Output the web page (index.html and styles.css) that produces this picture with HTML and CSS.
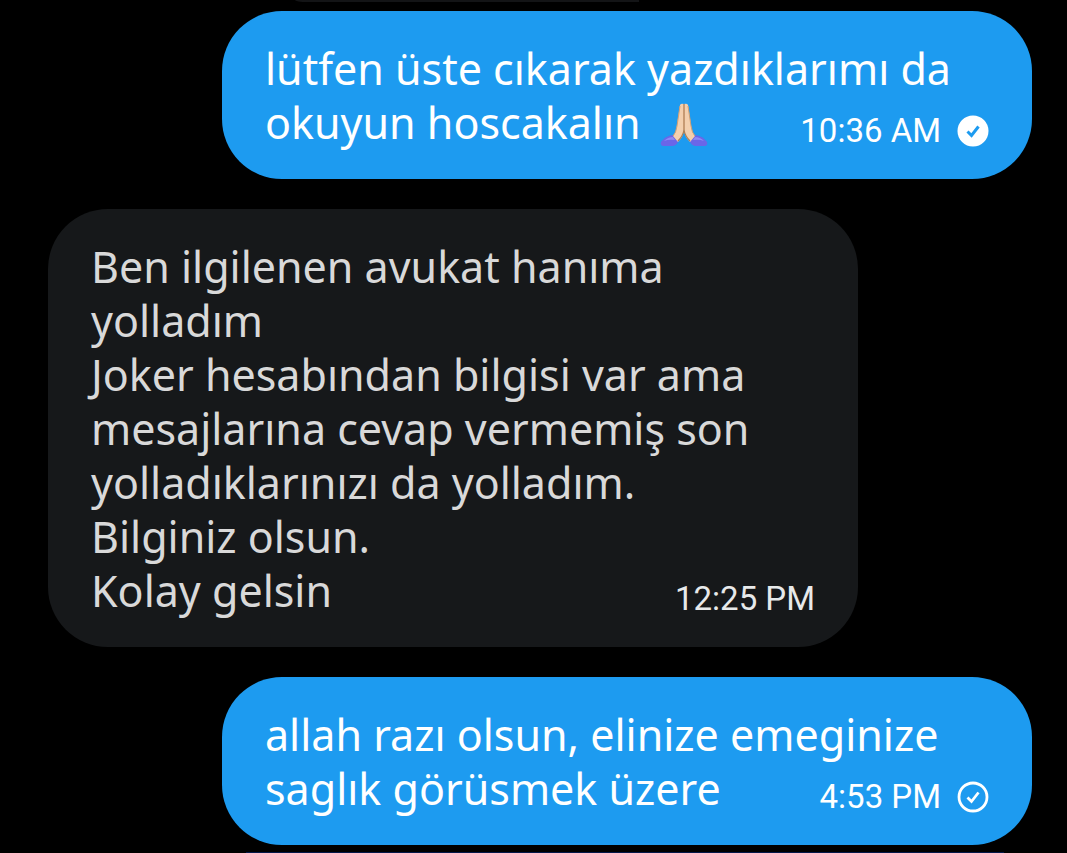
FILE: index.html
```
<!DOCTYPE html>
<html lang="tr">
<head>
    <meta charset="UTF-8">
    <title>Messages</title>
    <meta name="viewport" content="width=device-width, initial-scale=1">
    <link rel="stylesheet" href="styles.css">
</head>
<body>
    <main class="chat">
        <div class="edge edge-top"></div>

        <div class="message sent">
            <p class="text">lütfen üste cıkarak yazdıklarımı da<br>okuyun hoscakalın
                <svg class="emoji" viewBox="0 0 48 48" role="img" aria-label="folded hands">
                    <path d="M13 34 Q5 35 1 41 Q0 44 3 45 H12 Q16 45 18 41 L19 38Z" fill="#6a66e8"/>
                    <path d="M35 34 Q43 35 47 41 Q48 44 45 45 H36 Q32 45 30 41 L29 38Z" fill="#6a66e8"/>
                    <path d="M4 40 Q8 36 13 36 L15 39 Q9 38 4 40Z M44 40 Q40 36 35 36 L33 39 Q39 38 44 40Z" fill="#8c8af6"/>
                    <path d="M20 4 Q21 2 24 3 V28 Q24 35 18 41 L13 35 Q16 32 17 24Z" fill="#f3cfae"/>
                    <path d="M28 4 Q27 2 24 3 V28 Q24 35 30 41 L35 35 Q32 32 31 24Z" fill="#f3cfae"/>
                    <path d="M20 5 L17 25 Q16 32 13 35 M28 5 L31 25 Q32 32 35 35" fill="none" stroke="#cf9f74" stroke-width="1"/>
                    <path d="M24 3 V29 M24 29 Q23 35 18 40 M24 29 Q25 35 30 40" fill="none" stroke="#b07f55" stroke-width="1.3"/>
                </svg>
            </p>
            <div class="meta">
                <time>10:36 AM</time>
                <svg class="status" viewBox="0 0 32 32" role="img" aria-label="Seen">
                    <circle cx="16" cy="16" r="15.5" fill="#fff"/>
                    <path d="M10.5 16.5 L14.5 20.5 L21.5 11.5" fill="none" stroke="#1d9bf0" stroke-width="3"/>
                </svg>
            </div>
        </div>

        <div class="message received">
            <p class="text">Ben ilgilenen avukat hanıma<br>yolladım<br>Joker hesabından bilgisi var ama<br>mesajlarına cevap vermemiş son<br>yolladıklarınızı da yolladım.<br>Bilginiz olsun.<br>Kolay gelsin</p>
            <div class="meta">
                <time>12:25 PM</time>
            </div>
        </div>

        <div class="message sent">
            <p class="text">allah razı olsun, elinize emeginize<br>saglık görüsmek üzere</p>
            <div class="meta">
                <time>4:53 PM</time>
                <svg class="status" viewBox="0 0 32 32" role="img" aria-label="Sent">
                    <circle cx="16" cy="16" r="14" fill="none" stroke="#fff" stroke-width="2.8"/>
                    <path d="M10.5 16.5 L14.5 20.5 L21.5 11.5" fill="none" stroke="#fff" stroke-width="2.8"/>
                </svg>
            </div>
        </div>

        <div class="edge edge-bottom"></div>
    </main>
</body>
</html>
```

FILE: styles.css
```
body {
    margin: 0;
    background: #000;
    font-family: "Noto Sans", sans-serif;
}

.chat {
    display: flex;
    flex-direction: column;
    padding: 0 35px 0 48px;
}

.message {
    display: grid;
    box-sizing: border-box;
    width: calc(100% - 174px);
    padding: 31px 43px 29px;
    border-radius: 60px;
}

.message + .message {
    margin-top: 30px;
}

.message > * {
    grid-area: 1 / 1;
}

.sent {
    align-self: flex-end;
    background: #1d9bf0;
    color: #fff;
}

.received {
    background: #16181a;
    color: #d9d9d9;
}

.text {
    margin: 0;
    font-size: 43px;
    line-height: 54px;
}

.emoji {
    width: 48px;
    height: 48px;
    margin-left: 8px;
    vertical-align: -10px;
}

.meta {
    display: flex;
    align-items: center;
    align-self: end;
    justify-self: end;
    gap: 16px;
    font-family: Roboto, sans-serif;
    font-size: 33px;
    line-height: 38px;
}

.received .meta {
    color: #e7e9ea;
}

.status {
    width: 32px;
    height: 32px;
}

/* neighbouring messages that are scrolled out of view */
.edge-top {
    width: 35%;
    height: 2px;
    margin: 0 0 9px 247px;
    border-bottom-left-radius: 12px 2px;
    background: #131416;
}

.edge-bottom {
    align-self: flex-end;
    width: 77%;
    height: 1px;
    margin: 7px 28px 0 0;
    background: #03184a;
}
```
